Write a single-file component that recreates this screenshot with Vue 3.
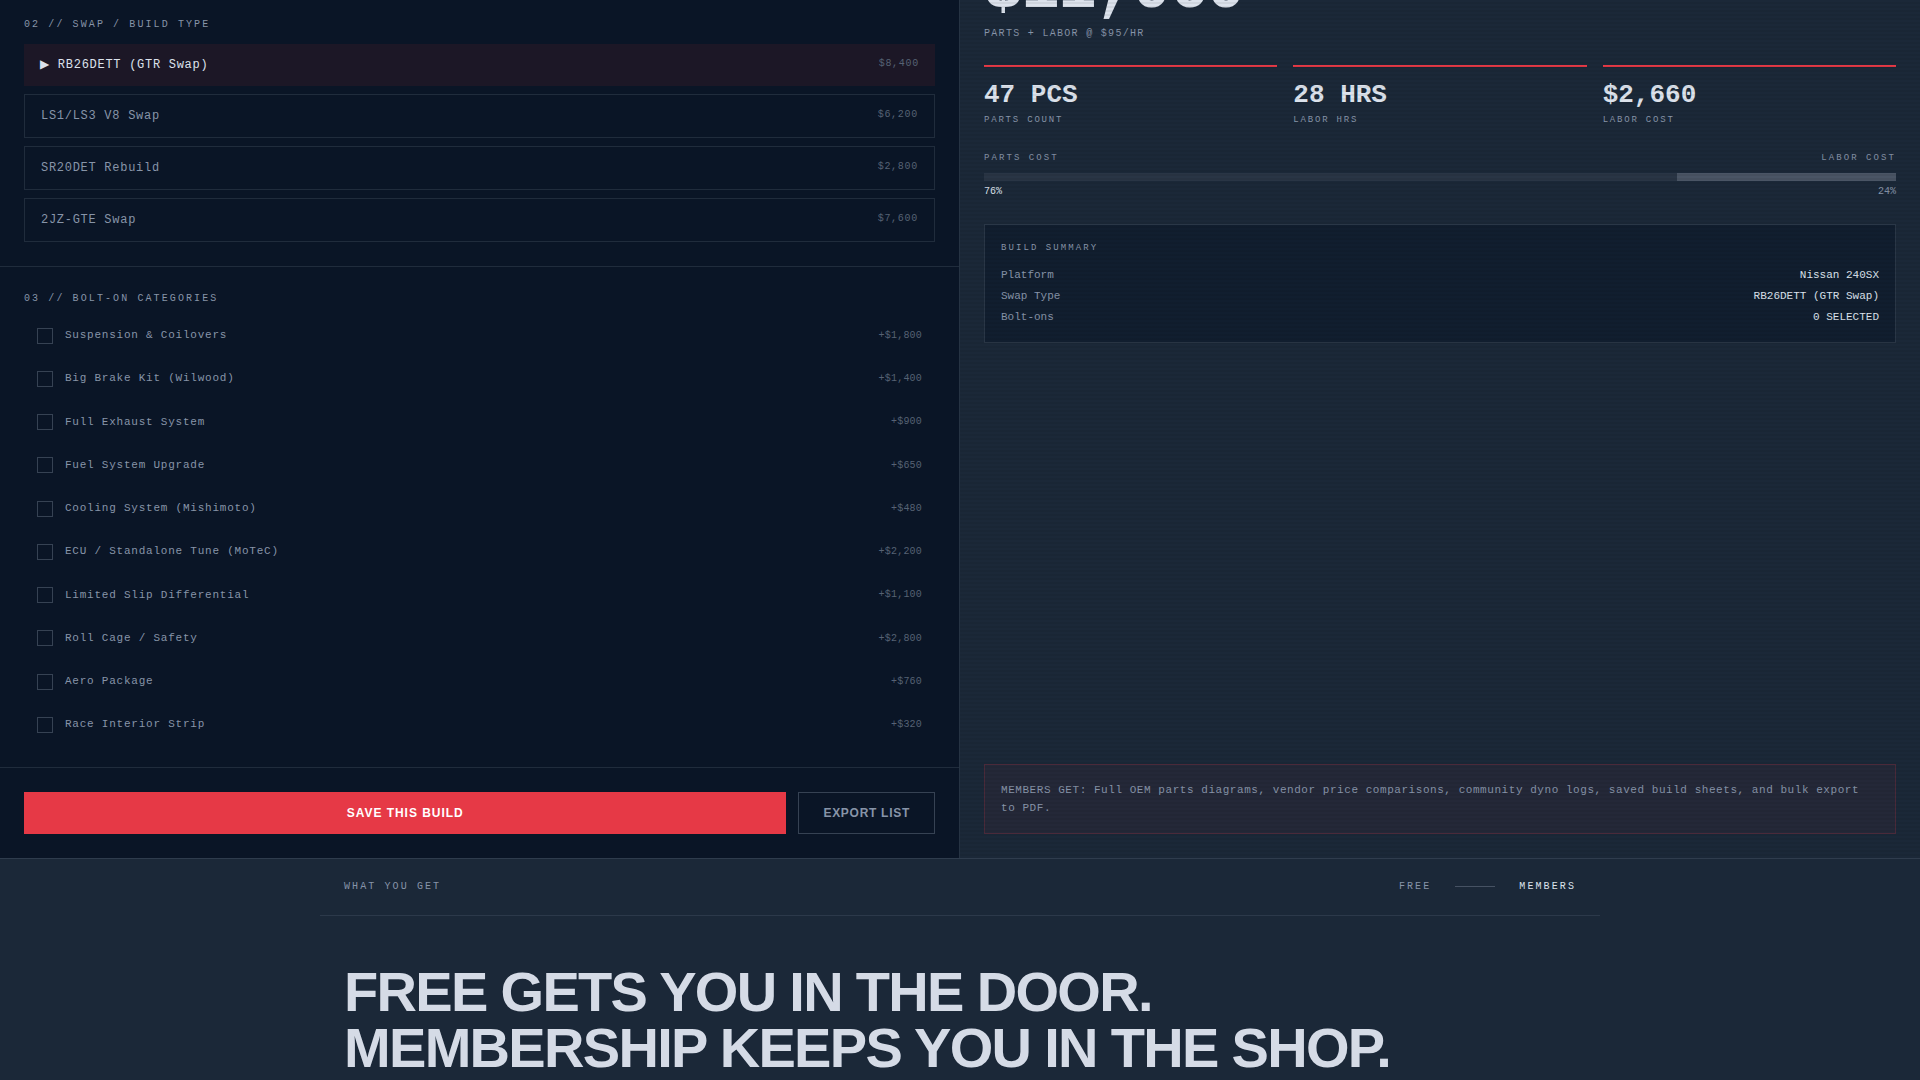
<script setup>
import { computed, ref } from 'vue'

const swaps = [
  { name: 'RB26DETT (GTR Swap)', price: 8400 },
  { name: 'LS1/LS3 V8 Swap', price: 6200 },
  { name: 'SR20DET Rebuild', price: 2800 },
  { name: '2JZ-GTE Swap', price: 7600 },
]

const boltOns = [
  { id: 'suspension', name: 'Suspension & Coilovers', price: 1800 },
  { id: 'brakes', name: 'Big Brake Kit (Wilwood)', price: 1400 },
  { id: 'exhaust', name: 'Full Exhaust System', price: 900 },
  { id: 'fuel', name: 'Fuel System Upgrade', price: 650 },
  { id: 'cooling', name: 'Cooling System (Mishimoto)', price: 480 },
  { id: 'ecu', name: 'ECU / Standalone Tune (MoTeC)', price: 2200 },
  { id: 'lsd', name: 'Limited Slip Differential', price: 1100 },
  { id: 'cage', name: 'Roll Cage / Safety', price: 2800 },
  { id: 'aero', name: 'Aero Package', price: 760 },
  { id: 'interior', name: 'Race Interior Strip', price: 320 },
]

const selected = ref(0)
const picked = ref([])
const hours = 28
const labor = hours * 95

const money = (n) => '$' + n.toLocaleString('en-US')
const swap = computed(() => swaps[selected.value])
const parts = computed(() =>
  boltOns.filter((b) => picked.value.includes(b.id)).reduce((sum, b) => sum + b.price, swap.value.price)
)
const total = computed(() => parts.value + labor)
const partsShare = computed(() => Math.round((parts.value / total.value) * 100))

const stats = computed(() => [
  { value: '47 PCS', label: 'PARTS COUNT' },
  { value: `${hours} HRS`, label: 'LABOR HRS' },
  { value: money(labor), label: 'LABOR COST' },
])
const summary = computed(() => [
  { key: 'Platform', value: 'Nissan 240SX' },
  { key: 'Swap Type', value: swap.value.name },
  { key: 'Bolt-ons', value: `${picked.value.length} SELECTED` },
])
</script>

<template>
  <main class="page">
    <section class="builder">
      <div class="config">
        <section class="block block-first">
          <h2 class="label">02 // SWAP / BUILD TYPE</h2>
          <div class="options">
            <button
              v-for="(s, i) in swaps"
              :key="s.name"
              type="button"
              class="option"
              :class="{ active: i === selected }"
              :aria-pressed="i === selected"
              @click="selected = i"
            >
              <span>{{ i === selected ? '▶ ' : '' }}{{ s.name }}</span>
              <span class="option-price">{{ money(s.price) }}</span>
            </button>
          </div>
        </section>

        <section class="block">
          <h2 class="label">03 // BOLT-ON CATEGORIES</h2>
          <div class="bolts">
            <label v-for="b in boltOns" :key="b.id" class="bolt" :for="b.id">
              <input :id="b.id" v-model="picked" type="checkbox" :value="b.id" />
              <span class="bolt-name">{{ b.name }}</span>
              <span class="bolt-price">+{{ money(b.price) }}</span>
            </label>
          </div>
        </section>

        <div class="actions">
          <button type="button" class="save">SAVE THIS BUILD</button>
          <button type="button" class="export">EXPORT LIST</button>
        </div>
      </div>

      <aside class="estimate">
        <div class="total">{{ money(total) }}</div>
        <p class="rate">PARTS + LABOR @ $95/HR</p>

        <div class="stats">
          <div v-for="s in stats" :key="s.label" class="stat">
            <div class="stat-value">{{ s.value }}</div>
            <div class="stat-label">{{ s.label }}</div>
          </div>
        </div>

        <div class="split">
          <div class="split-row split-names"><span>PARTS COST</span><span>LABOR COST</span></div>
          <div class="bar">
            <div class="bar-parts" :style="{ width: partsShare + '%' }"></div>
            <div class="bar-labor"></div>
          </div>
          <div class="split-row split-values">
            <span class="bright">{{ partsShare }}%</span><span>{{ 100 - partsShare }}%</span>
          </div>
        </div>

        <div class="summary">
          <h3 class="summary-title">BUILD SUMMARY</h3>
          <dl class="summary-list">
            <div v-for="row in summary" :key="row.key" class="summary-row">
              <dt>{{ row.key }}</dt>
              <dd>{{ row.value }}</dd>
            </div>
          </dl>
        </div>

        <p class="note">
          MEMBERS GET: Full OEM parts diagrams, vendor price comparisons, community dyno logs, saved
          build sheets, and bulk export to PDF.
        </p>
      </aside>
    </section>

    <section class="plans">
      <div class="plans-inner">
        <header class="plans-head">
          <span>WHAT YOU GET</span>
          <div class="tiers">
            <span>FREE</span>
            <span class="tier-line"></span>
            <span class="bright">MEMBERS</span>
          </div>
        </header>
        <h1 class="headline">FREE GETS YOU IN THE DOOR.<br />MEMBERSHIP KEEPS YOU IN THE SHOP.</h1>
      </div>
    </section>
  </main>
</template>

<style>
body {
  margin: 0;
  background: #1b2838;
}
</style>

<style scoped>
* {
  box-sizing: border-box;
}

h1,
h2,
h3,
p,
dl,
dd {
  margin: 0;
  font-weight: 400;
}

button {
  border-radius: 0;
  cursor: pointer;
}

.page {
  height: 100vh;
  overflow: hidden;
  color: #8794a8;
  font-family: 'Liberation Mono', 'DejaVu Sans', monospace;
  font-size: 12px;
}

.bright {
  color: #dce2ec;
}

.builder {
  display: grid;
  grid-template-columns: 1fr 1fr;
  border-bottom: 1px solid #2f3c4d;
}

.config {
  background: #0a1526;
  border-right: 1px solid #263343;
}

.block {
  padding: 24px;
  border-bottom: 1px solid #202c3c;
}

.block-first {
  padding-top: 17px;
}

.label {
  margin-bottom: 12px;
  font-size: 10px;
  line-height: 15px;
  letter-spacing: 0.21em;
}

.options {
  display: flex;
  flex-direction: column;
  gap: 8px;
}

.option {
  display: flex;
  justify-content: space-between;
  align-items: flex-start;
  padding: 14px 16px;
  border: 1px solid #202c3c;
  background: none;
  color: #8794a8;
  font-family: inherit;
  font-size: 12px;
  line-height: 14px;
  letter-spacing: 0.06em;
  text-align: left;
}

.option.active {
  border: 0;
  background: #1c1726;
  color: #dce2ec;
}

.option-price {
  color: #566274;
  font-size: 10px;
  line-height: 12px;
}

.bolts {
  display: flex;
  flex-direction: column;
  gap: 8px;
}

.bolt {
  display: flex;
  align-items: center;
  gap: 12px;
  padding: 8px 13px;
  font-size: 11px;
  line-height: 1.75;
  letter-spacing: 0.07em;
  cursor: pointer;
}

.bolt input {
  appearance: none;
  width: 16px;
  height: 16px;
  margin: 0;
  border: 1px solid #364253;
  background: none;
}

.bolt input:checked {
  border-color: #e63946;
  background: #e63946;
}

.bolt-name {
  flex: 1;
}

.bolt-price {
  color: #566274;
  font-size: 10px;
  letter-spacing: 0.02em;
}

.actions {
  display: flex;
  gap: 12px;
  padding: 24px;
}

.save,
.export {
  height: 42px;
  padding: 0 24px;
  font-family: 'Liberation Sans', Arial, sans-serif;
  font-size: 12px;
  font-weight: 700;
  letter-spacing: 0.06em;
}

.save {
  flex: 1;
  border: 0;
  background: #e63946;
  color: #fff;
  letter-spacing: 0.08em;
}

.export {
  border: 1px solid #364253;
  background: none;
  color: #8794a8;
}

.estimate {
  position: relative;
  display: flex;
  flex-direction: column;
  padding: 0 24px 24px;
  background: #1b2838;
}

.estimate::after {
  content: '';
  position: absolute;
  inset: 0;
  background: repeating-linear-gradient(0deg, transparent 0 2px, rgba(0, 0, 0, 0.06) 2px 4px);
  pointer-events: none;
}

/* The running total is scrolled partly above the top edge. */
.total {
  margin-top: -42px;
  color: #dce2ec;
  font-size: 64px;
  font-weight: 700;
  line-height: 64px;
  letter-spacing: -0.02em;
}

.rate {
  margin-top: 4px;
  font-size: 10px;
  line-height: 16px;
  letter-spacing: 0.13em;
}

.stats {
  display: grid;
  grid-template-columns: repeat(3, 1fr);
  gap: 16px;
  margin-top: 23px;
}

.stat {
  padding-top: 12px;
  border-top: 2px solid #e63946;
}

.stat-value {
  color: #dce2ec;
  font-size: 26px;
  font-weight: 700;
  line-height: 32px;
}

.stat-label {
  margin-top: 1px;
  font-size: 9px;
  line-height: 16px;
  letter-spacing: 0.2em;
}

.split {
  margin-top: 24px;
}

.split-row {
  display: flex;
  justify-content: space-between;
  line-height: 12px;
}

.split-names {
  font-size: 9px;
  letter-spacing: 0.23em;
}

.split-values {
  font-size: 10px;
}

.bar {
  display: flex;
  height: 8px;
  margin: 9px 0 5px;
}

.bar-parts {
  background: #293545;
}

.bar-labor {
  flex: 1;
  background: #4a5565;
}

.summary {
  margin-top: 26px;
  padding: 16px;
  border: 1px solid #2a3747;
  background: #111e2f;
}

.summary-title {
  margin-bottom: 12px;
  font-size: 9px;
  line-height: 14px;
  letter-spacing: 0.23em;
}

.summary-list {
  display: flex;
  flex-direction: column;
  gap: 4px;
}

.summary-row {
  display: flex;
  justify-content: space-between;
  font-size: 11px;
  line-height: 17px;
}

.summary-row dd {
  color: #dce2ec;
}

.note {
  margin-top: auto;
  padding: 16px;
  border: 1px solid #4a2a3a;
  background: #242838;
  font-size: 11px;
  line-height: 18px;
  letter-spacing: 0.05em;
}

.plans {
  background: #1b2838;
}

.plans-inner {
  max-width: 1280px;
  margin: 0 auto;
}

.plans-head {
  display: flex;
  justify-content: space-between;
  align-items: center;
  padding: 20px 24px;
  border-bottom: 1px solid #2c394a;
  font-size: 10px;
  line-height: 16px;
  letter-spacing: 0.21em;
}

.tiers {
  display: flex;
  align-items: center;
  gap: 24px;
}

.tier-line {
  width: 40px;
  height: 1px;
  background: #465263;
}

.headline {
  padding: 48px 24px;
  color: #d5dbe6;
  font-family: 'Liberation Sans', Arial, sans-serif;
  font-size: 56px;
  font-weight: 700;
  line-height: 56px;
  letter-spacing: -0.03em;
}
</style>
